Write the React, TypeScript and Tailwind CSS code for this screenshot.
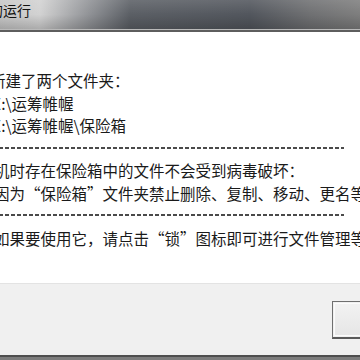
const cn = { fontFamily: '"Noto Sans CJK SC", "Noto Sans", sans-serif' };

const Dashes = () => (
  <div className="flex h-[22.5px] items-center">
    <div className="ml-[-1px] h-[2px] w-[345px] bg-[repeating-linear-gradient(90deg,#4a4a4a_0px,#4a4a4a_4px,transparent_4px,transparent_6px)]" />
  </div>
);

export default function App() {
  return (
    <div
      lang="zh-CN"
      className="flex h-[360px] w-[360px] flex-col overflow-hidden bg-white text-[#1a1a1a]"
      style={cn}
    >
      {/* title bar */}
      <div className="relative h-[29px] shrink-0 bg-[linear-gradient(90deg,#c6c6c6_0px,#d2d2d2_40px,#8f9195_90px,#5b5f65_130px,#52565d_250px,#6f7072_310px,#7e7e7e_360px)]">
        <div className="absolute inset-0 bg-[linear-gradient(180deg,rgba(255,255,255,0.12)_0%,rgba(0,0,0,0)_50%,rgba(0,0,0,0.18)_100%)]" />
        <div className="relative ml-[-11px] pt-[1px] text-[14px] leading-[18px] text-[#111]">的运行</div>
      </div>
      <div className="h-[1px] shrink-0 bg-[#b9b9b9]" />
      <div className="h-[2px] shrink-0 bg-[#5e5e5e]" />

      {/* body */}
      <div className="h-[251px] shrink-0 bg-white pt-[37px] text-[15.5px] leading-[22.5px] whitespace-nowrap">
        <div className="ml-[-10px]">新建了两个文件夹：</div>
        <div className="ml-[-8px]">E:\运筹帷幄</div>
        <div className="ml-[-8px]">E:\运筹帷幄\保险箱</div>
        <Dashes />
        <div className="ml-[-6px]">机时存在保险箱中的文件不会受到病毒破坏：</div>
        <div className="ml-[-6px]">因为“保险箱”文件夹禁止删除、复制、移动、更名等</div>
        <Dashes />
        <div className="ml-[-6px]">如果要使用它，请点击“锁”图标即可进行文件管理等</div>
      </div>

      {/* footer */}
      <div className="flex h-[72px] shrink-0 justify-end border-t border-[#e3e3e3] bg-[#f0f0f0] pt-[17px]">
        <div className="mr-[-40px] h-[38px] w-[68px] border border-[#6f6f6f] border-b-2 border-b-[#5a5a5a] p-[1px]">
          <div className="h-full w-full border border-[#fbfbfb] bg-[linear-gradient(180deg,#f2f2f2,#e6e6e6)]" />
        </div>
      </div>
      <div className="h-[2px] shrink-0 bg-[#4e4e4e]" />
      <div className="flex-1 bg-[#7c7c7c]" />
    </div>
  );
}
